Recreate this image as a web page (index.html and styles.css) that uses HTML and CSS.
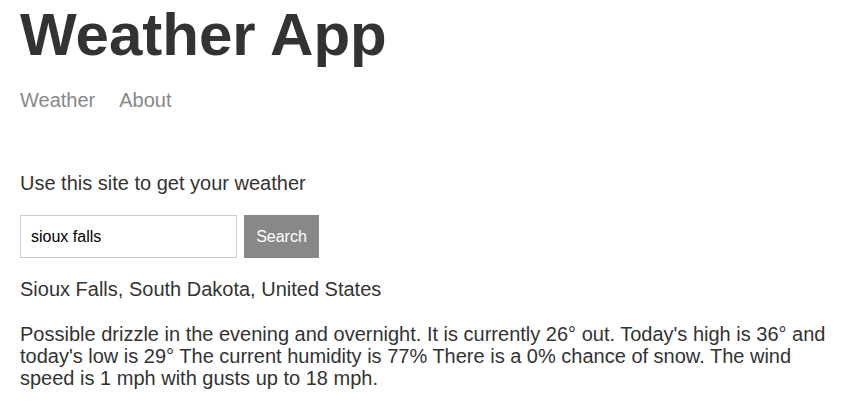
FILE: index.html
```html
<!DOCTYPE html>
<html>
<head>
<meta charset="utf-8">
<title>Weather</title>
<link rel="stylesheet" href="styles.css">
</head>
<body>
<header class="header">
  <h1 class="title">Weather App</h1>
  <nav class="nav">
    <a class="nav-link" href="#">Weather</a>
    <a class="nav-link" href="#">About</a>
  </nav>
</header>
<main class="main">
  <p class="intro">Use this site to get your weather</p>
  <form class="search">
    <input class="search-input" type="text" value="sioux falls">
    <button class="search-button" type="button">Search</button>
  </form>
  <p class="location">Sioux Falls, South Dakota, United States</p>
  <p class="forecast">Possible drizzle in the evening and overnight. It is currently 26° out. Today's high is 36° and today's low is 29° The current humidity is 77% There is a 0% chance of snow. The wind speed is 1 mph with gusts up to 18 mph.</p>
</main>
</body>
</html>
```

FILE: styles.css
```css
html, body {
  margin: 0;
  padding: 0;
}
body {
  background: #fff;
  color: #333;
  font-family: "Liberation Sans", Arial, sans-serif;
  font-size: 20px;
  padding: 0 6px 0 20px;
}
.header {
  margin: 0 0 60px 0;
}
.title {
  font-size: 60px;
  font-weight: bold;
  margin: 0 0 20px 0;
}
.nav {
  display: flex;
  gap: 24px;
}
.nav-link {
  color: #888;
  text-decoration: none;
}
.main p {
  margin: 0;
}
.main .intro {
  margin-bottom: 20px;
}
.search {
  display: flex;
  gap: 7px;
  margin: 0 0 20px 0;
}
.search-input {
  box-sizing: border-box;
  width: 217px;
  height: 43px;
  border: 1px solid #ccc;
  padding: 0 10px;
  font-family: "Liberation Sans", Arial, sans-serif;
  font-size: 16px;
  color: #000;
  outline: none;
}
.search-button {
  box-sizing: border-box;
  width: 75px;
  height: 43px;
  border: 1px solid #888;
  background: #888;
  color: #fff;
  font-family: "Liberation Sans", Arial, sans-serif;
  font-size: 16px;
  padding: 0;
}
.main .location {
  margin-bottom: 22px;
}
.forecast {
  line-height: 22px;
}
```
